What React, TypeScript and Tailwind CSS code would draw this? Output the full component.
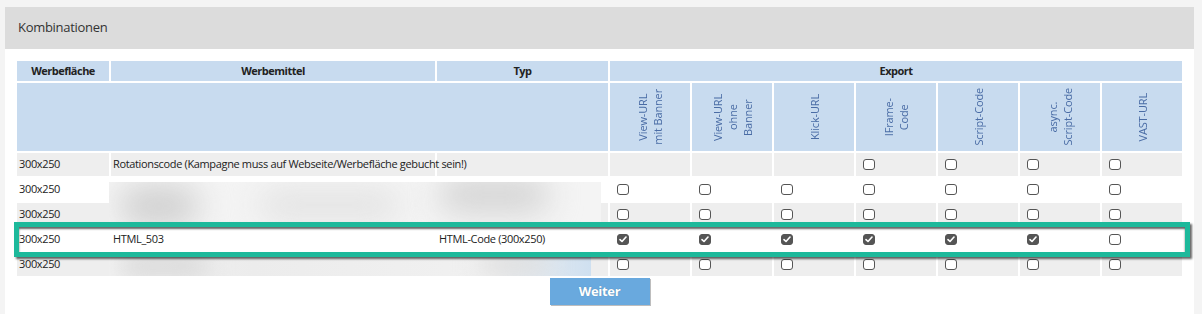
import React from "react";

const exportCols = [
  ["View-URL", "mit Banner"],
  ["View-URL", "ohne", "Banner"],
  ["Klick-URL"],
  ["IFrame-", "Code"],
  ["Script-Code"],
  ["async.", "Script-Code"],
  ["VAST-URL"],
];

// null = no checkbox, true = checked, false = unchecked
const rows: { size: string; mittel: string; typ: string; boxes: (boolean | null)[]; gray: boolean }[] = [
  {
    size: "300x250",
    mittel: "Rotationscode (Kampagne muss auf Webseite/Werbefläche gebucht sein!)",
    typ: "",
    boxes: [null, null, null, false, false, false, false],
    gray: true,
  },
  { size: "300x250", mittel: "", typ: "", boxes: [false, false, false, false, false, false, false], gray: false },
  { size: "300x250", mittel: "", typ: "", boxes: [false, false, false, false, false, false, false], gray: true },
  { size: "300x250", mittel: "HTML_503", typ: "HTML-Code (300x250)", boxes: [true, true, true, true, true, true, false], gray: false },
  { size: "300x250", mittel: "", typ: "", boxes: [false, false, false, false, false, false, false], gray: true },
];

const Checkbox = ({ checked }: { checked: boolean }) => (
  <span
    className={`ml-[7px] flex h-[11px] w-[12px] items-center justify-center rounded-[3px] border ${
      checked ? "border-[#555] bg-[#555]" : "border-[#555] bg-white"
    }`}
  >
    {checked && (
      <svg width="8" height="7" viewBox="0 0 8 7">
        <path d="M1 3.6 L3 5.5 L7 1" fill="none" stroke="white" strokeWidth="1.6" strokeLinecap="round" strokeLinejoin="round" />
      </svg>
    )}
  </span>
);

const App = () => {
  return (
    <div className="h-[314px] overflow-hidden bg-[#f4f4f4] pl-[5px] pr-[8px] pt-[7px] font-['Open_Sans',sans-serif] text-[#222]">
      <div className="h-full bg-white">
        <div className="flex h-[42px] items-center bg-[#dcdcdc] pl-[13px] text-[13px] tracking-[-0.3px] text-[#333]">Kombinationen</div>
        <div className="relative px-[10px] pt-[10px]">
          <table className="w-[1169px] table-fixed border-separate border-spacing-[2px] text-[11px] tracking-[-0.35px]">
            <colgroup>
              <col className="w-[92px]" />
              <col className="w-[324px]" />
              <col className="w-[171px]" />
              {exportCols.map((_, i) => (
                <col key={i} className="w-[80px]" />
              ))}
            </colgroup>
            <thead>
              <tr className="h-[20px] bg-[#c8dbef] text-[11px] font-bold tracking-[-0.5px]">
                <th className="p-0">Werbefläche</th>
                <th className="p-0">Werbemittel</th>
                <th className="p-0">Typ</th>
                <th className="p-0" colSpan={7}>
                  Export
                </th>
              </tr>
              <tr className="h-[68px] bg-[#c8dbef]">
                <th colSpan={3} className="p-0"></th>
                {exportCols.map((lines, i) => (
                  <th key={i} className="p-0">
                    <div className="flex h-[68px] items-center justify-center">
                      <div className="rotate-180 text-center text-[11px] font-normal leading-[15px] tracking-[-0.15px] text-[#4a6ca5] [writing-mode:vertical-rl]">
                        {lines.map((l, j) => (
                          <React.Fragment key={j}>
                            {j > 0 && <br />}
                            {l}
                          </React.Fragment>
                        ))}
                      </div>
                    </div>
                  </th>
                ))}
              </tr>
            </thead>
            <tbody>
              {rows.map((r, i) => (
                <tr key={i} className={`h-[23px] ${r.gray ? "bg-[#eeeeee]" : "bg-white"}`}>
                  <td className="px-[2px] py-0 whitespace-nowrap">{r.size}</td>
                  <td className="px-[2px] py-0 whitespace-nowrap">{r.mittel}</td>
                  <td className="px-[2px] py-0 whitespace-nowrap">{r.typ}</td>
                  {r.boxes.map((b, j) => (
                    <td key={j} className="p-0">
                      {b !== null && <Checkbox checked={b} />}
                    </td>
                  ))}
                </tr>
              ))}
            </tbody>
          </table>

          {/* blurred (anonymised) entries */}
          <div className="absolute left-[104px] top-[133px] h-[44px] w-[492px] overflow-hidden bg-[#f4f4f4]">
            <div className="absolute left-[10px] top-[4px] h-[40px] w-[80px] rounded-full bg-[#cfcfcf] blur-lg" />
            <div className="absolute left-[150px] top-[8px] h-[30px] w-[140px] rounded-full bg-[#e2e2e2] blur-lg" />
            <div className="absolute left-[330px] top-[-4px] h-[34px] w-[110px] rounded-full bg-[#d2d2d2] blur-lg" />
          </div>
          <div className="absolute left-[104px] top-[204px] h-[23px] w-[482px] overflow-hidden bg-[linear-gradient(90deg,#f2f2f2_0%,#ececec_30%,#f1f1f1_80%,#cfe0f0_100%)]">
            <div className="absolute left-[10px] top-[2px] h-[22px] w-[90px] rounded-full bg-[#d6d6d6] blur-md" />
            <div className="absolute left-[370px] top-[2px] h-[20px] w-[70px] rounded-full bg-[#dcdcdc] blur-md" />
          </div>

          {/* highlighted combination */}
          <div className="pointer-events-none absolute left-[9px] top-[173px] h-[35px] w-[1176px] border-[5px] border-[#1db99b] shadow-[2px_2px_2px_rgba(0,0,0,0.6),inset_0_2px_2px_rgba(0,0,0,0.6)]" />

          <button className="mx-auto block h-[27px] w-[100px] bg-[#69a9de] text-[13px] font-bold tracking-[-0.3px] text-white shadow-[1px_1px_0_#bdbdbd] [text-shadow:0_0_1px_rgba(0,0,0,0.25)]">
            Weiter
          </button>
        </div>
      </div>
    </div>
  );
};

export default App;
